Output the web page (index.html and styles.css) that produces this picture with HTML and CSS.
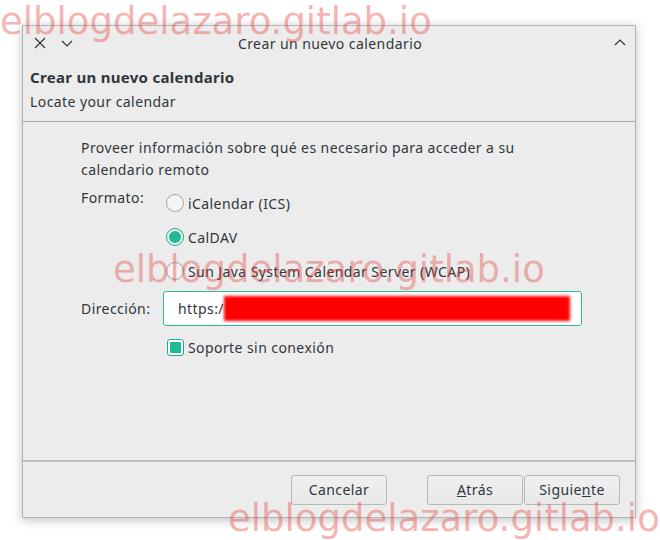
FILE: index.html
```html
<!DOCTYPE html>
<html lang="es">
<head>
    <meta charset="UTF-8">
    <title>Crear un nuevo calendario</title>
    <link rel="stylesheet" href="styles.css">
</head>
<body>
    <div class="window">
        <div class="titlebar">
            <div class="tb-left">
                <svg width="12" height="12" viewBox="0 0 12 12"><path d="M1 1 L11 11 M11 1 L1 11" stroke="#333" stroke-width="1.2" fill="none"/></svg>
                <svg width="12" height="12" viewBox="0 0 12 12"><path d="M1 4 L6 9 L11 4" stroke="#333" stroke-width="1.2" fill="none"/></svg>
            </div>
            <div class="tb-title">Crear un nuevo calendario</div>
            <div class="tb-right">
                <svg width="12" height="12" viewBox="0 0 12 12"><path d="M1 8 L6 3 L11 8" stroke="#333" stroke-width="1.2" fill="none"/></svg>
            </div>
        </div>

        <div class="header">
            <div class="header-title">Crear un nuevo calendario</div>
            <div class="header-sub">Locate your calendar</div>
        </div>

        <div class="content">
            <p class="intro">Proveer información sobre qué es necesario para acceder a su calendario remoto</p>
            <div class="form">
                <div class="label">Formato:</div>
                <div class="options">
                    <div class="radio-row"><span class="radio"></span>iCalendar (ICS)</div>
                    <div class="radio-row"><span class="radio checked"></span>CalDAV</div>
                    <div class="radio-row"><span class="radio"></span>Sun Java System Calendar Server (WCAP)</div>
                </div>
                <div class="label addr">Dirección:</div>
                <div class="field">
                    <span class="url">https:/</span>
                    <span class="redacted"></span>
                </div>
                <div></div>
                <div class="check-row"><span class="checkbox"></span>Soporte sin conexión</div>
            </div>
        </div>

        <div class="footer">
            <button class="btn cancel">Cancelar</button>
            <button class="btn back"><u>A</u>trás</button>
            <button class="btn">Siguie<u>n</u>te</button>
        </div>
    </div>

    <div class="mark mark-top">elblogdelazaro.gitlab.io</div>
    <div class="mark mark-mid">elblogdelazaro.gitlab.io</div>
    <div class="mark mark-bottom">elblogdelazaro.gitlab.io</div>
</body>
</html>
```

FILE: styles.css
```css
body {
    margin: 0;
    background: #fff;
    font-family: "Noto Sans", "DejaVu Sans", sans-serif;
    font-size: 14px;
    letter-spacing: 0.42px;
    color: #31363b;
    width: 660px;
    height: 540px;
    overflow: hidden;
    position: relative;
}
.window {
    margin: 25px 0 0 22px;
    width: 614px;
    height: 493px;
    background: #ececec;
    border: 1px solid #b4b4b4;
    box-sizing: border-box;
    box-shadow: 0 2px 10px rgba(0,0,0,0.25);
    display: flex;
    flex-direction: column;
}
.titlebar {
    height: 34px;
    display: flex;
    align-items: center;
    padding: 0 9px 0 11px;
}
.tb-left {
    display: flex;
    gap: 15px;
    width: 60px;
}
.tb-title {
    flex: 1;
    text-align: center;
}
.tb-right {
    width: 60px;
    display: flex;
    justify-content: flex-end;
}
.header {
    padding: 6px 7px 5px;
    border-bottom: 1px solid #a8a8a8;
}
.header-title {
    font-weight: bold;
    font-size: 15px;
    letter-spacing: 0.3px;
    line-height: 22px;
}
.header-sub {
    line-height: 28px;
}
.content {
    flex: 1;
    padding: 15px 53px 0 58px;
}
.intro {
    margin: 0 0 7px;
    line-height: 22px;
}
.form {
    display: grid;
    grid-template-columns: 82px 1fr;
    align-items: start;
}
.label {
    line-height: 20px;
}
.options {
    display: flex;
    flex-direction: column;
    gap: 14px;
    margin-top: 5px;
}
.radio-row, .check-row {
    display: flex;
    align-items: center;
    height: 20px;
}
.radio {
    width: 18px;
    height: 18px;
    border-radius: 50%;
    border: 1px solid #a4a4a4;
    background: #f4f4f4;
    box-sizing: border-box;
    margin: 0 4px 0 3px;
    position: relative;
}
.radio.checked {
    border-color: #1bab8d;
}
.radio.checked::after {
    content: "";
    position: absolute;
    inset: 2px;
    border-radius: 50%;
    background: #1fbb96;
}
.addr {
    margin-top: 18px;
}
.field {
    margin-top: 10px;
    height: 35px;
    background: #fff;
    border: 1px solid #2eb99a;
    border-radius: 3px;
    box-sizing: border-box;
    display: flex;
    align-items: center;
    padding-left: 14px;
}
.url {
    line-height: 20px;
}
.redacted {
    width: 346px;
    height: 25px;
    background: #ff0000;
    filter: blur(1.5px);
}
.check-row {
    margin-top: 11px;
}
.checkbox {
    width: 17px;
    height: 17px;
    border: 1px solid #1bab8d;
    border-radius: 3px;
    box-sizing: border-box;
    margin: 0 4px;
    position: relative;
    background: #fff;
}
.checkbox::after {
    content: "";
    position: absolute;
    inset: 2px;
    border-radius: 1px;
    background: #1fbb96;
}
.footer {
    border-top: 2px solid #bdbdbd;
    flex: 0 0 57px;
    box-sizing: border-box;
    display: flex;
    align-items: center;
    justify-content: flex-end;
    padding: 0 15px 0 0;
}
.btn {
    font-family: inherit;
    font-size: 14px;
    letter-spacing: 0.42px;
    color: #31363b;
    width: 96px;
    height: 30px;
    background: linear-gradient(#f0f0f0, #e8e8e8);
    border: 1px solid #b8b8b8;
    border-radius: 3px;
}
.btn.cancel {
    margin-right: 40px;
}
.btn.back {
    margin-right: 1px;
}
.mark {
    position: absolute;
    font-family: "DejaVu Sans", sans-serif;
    font-size: 37px;
    line-height: 37px;
    letter-spacing: 0;
    color: rgba(230, 60, 60, 0.4);
    white-space: nowrap;
    pointer-events: none;
}
.mark-top {
    left: 0;
    top: 3px;
}
.mark-mid {
    left: 113px;
    top: 251px;
}
.mark-bottom {
    left: 228px;
    top: 500px;
}
```
